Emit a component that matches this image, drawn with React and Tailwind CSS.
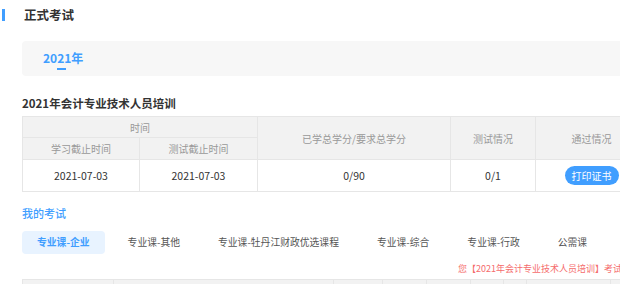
import React from 'react';

const tabs = ['专业课-企业', '专业课-其他', '专业课-牡丹江财政优选课程', '专业课-综合', '专业课-行政', '公需课'];

// bottom table column widths (starts at x=22)
const examCols = [91, 220, 49, 44, 44, 33, 23, 84, 37];

const App = () => {
  return (
    <div className="w-[620px] h-[284px] overflow-hidden bg-white font-['Noto_Sans_CJK_SC','Noto_Sans',sans-serif]">
      {/* Header */}
      <div className="flex items-center pt-[9px] pl-[2px]">
        <div className="w-[3px] h-[12px] bg-[#409eff]" />
        <span className="ml-[19px] text-[12.5px] leading-[12px] font-bold text-[#333]">正式考试</span>
      </div>

      <div className="pl-[22px] w-[647px]">
        {/* Year tabs */}
        <div className="mt-[20px] h-[35px] bg-[#f7f7f7] rounded-l-[4px] pl-[21px] pt-[9px] flex flex-col">
          <span className="text-[12px] leading-[16px] font-bold text-[#409eff]">2021年</span>
          <div className="mt-[2px] ml-[14px] w-[9px] h-[2px] bg-[#409eff]" />
        </div>

        {/* Training summary */}
        <div className="mt-[18px] h-[18px] leading-[18px] text-[11.5px] font-bold text-[#333]">2021年会计专业技术人员培训</div>
        <table className="mt-[4px] w-[625px] border-collapse table-fixed text-center">
          <colgroup>
            <col className="w-[117px]" />
            <col className="w-[118px]" />
            <col className="w-[193px]" />
            <col className="w-[85px]" />
            <col className="w-[112px]" />
          </colgroup>
          <thead className="bg-[#f2f2f2] text-[10px] text-[#999]">
            <tr className="h-[21px]">
              <th colSpan={2} className="border border-[#e6e6e6] font-normal">时间</th>
              <th rowSpan={2} className="border border-[#e6e6e6] font-normal">已学总学分/要求总学分</th>
              <th rowSpan={2} className="border border-[#e6e6e6] font-normal">测试情况</th>
              <th rowSpan={2} className="border border-[#e6e6e6] font-normal">通过情况</th>
            </tr>
            <tr className="h-[22px]">
              <th className="border border-[#e6e6e6] font-normal">学习截止时间</th>
              <th className="border border-[#e6e6e6] font-normal">测试截止时间</th>
            </tr>
          </thead>
          <tbody className="text-[10.5px] text-[#333]">
            <tr className="h-[32px]">
              <td className="border border-[#e6e6e6]">2021-07-03</td>
              <td className="border border-[#e6e6e6]">2021-07-03</td>
              <td className="border border-[#e6e6e6]">0/90</td>
              <td className="border border-[#e6e6e6]">0/1</td>
              <td className="border border-[#e6e6e6]">
                <button className="h-[19px] px-[7px] rounded-full bg-[#409eff] text-white text-[10px] leading-[19px]">打印证书</button>
              </td>
            </tr>
          </tbody>
        </table>

        {/* My exams */}
        <div className="mt-[12px] h-[18px] leading-[18px] text-[11px] font-medium text-[#409eff]">我的考试</div>
        <div className="mt-[9px] flex gap-2">
          {tabs.map((t, i) => (
            <div
              key={t}
              className={`h-[23px] px-[15px] flex items-center rounded-[4px] text-[9.8px] whitespace-nowrap ${
                i === 0 ? 'bg-[#e8f3ff] text-[#409eff] font-bold' : 'text-[#555]'
              }`}
            >
              {t}
            </div>
          ))}
        </div>

        <div className="mt-[8px] pl-[436px] h-[14px] leading-[14px] text-[9px] text-[#f56c6c] whitespace-nowrap">
          您【2021年会计专业技术人员培训】考试已结束
        </div>

        <div className="mt-[3px] flex h-[20px] bg-[#f2f2f2] border-t border-l border-[#e6e6e6]">
          {examCols.map((w, i) => (
            <div key={i} style={{ width: w }} className="shrink-0 border-r border-[#e6e6e6]" />
          ))}
        </div>
      </div>
    </div>
  );
};

export default App;
